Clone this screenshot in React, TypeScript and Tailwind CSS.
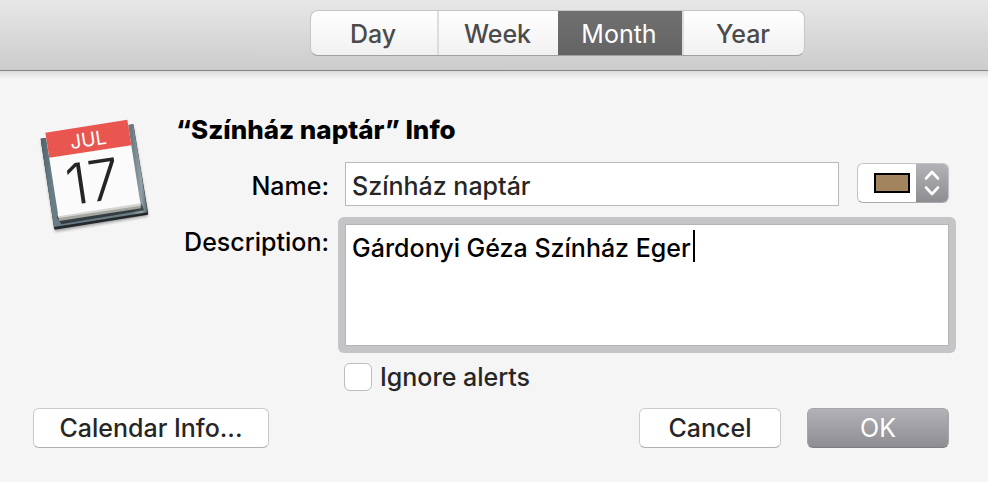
import { useState } from "react";

const views = [
  { name: "Day", width: "w-[126px]" },
  { name: "Week", width: "w-[121px]" },
  { name: "Month", width: "w-[124px]" },
  { name: "Year", width: "w-[122px]" },
];

function CalendarIcon() {
  return (
    <svg
      className="w-[116px] h-[120px] shrink-0"
      viewBox="51 47 348 360"
      role="img"
      aria-label="Calendar, July 17"
    >
      <defs>
        <linearGradient id="board" x1="0" y1="0" x2="1" y2="0">
          <stop offset="0" stopColor="#4e606a" />
          <stop offset="0.1" stopColor="#697d87" />
          <stop offset="0.85" stopColor="#6b7b82" />
          <stop offset="0.94" stopColor="#93a1a6" />
          <stop offset="1" stopColor="#55656d" />
        </linearGradient>
        <filter id="soft" x="-10%" y="-10%" width="120%" height="120%">
          <feGaussianBlur stdDeviation="5" />
        </filter>
      </defs>
      <path d="M64 122 L340 80 L384 348 L105 394 Z" fill="#000" opacity="0.35" filter="url(#soft)" />
      <path d="M62 115 L340 72 L384 336 L384 343 L104 388 L102 382 Z" fill="#22282b" />
      <path d="M62 115 L340 72 L383 336 L102 380 Z" fill="url(#board)" />
      <path d="M110 350 L365 312 L372 330 L124 372 Z" fill="#23292c" opacity="0.75" />
      <path d="M112 340 L361 303 L363 324 L118 362 Z" fill="#a3a59f" />
      <path d="M113 340 L361 303 L362 316 L116 353 Z" fill="#d6d7d3" />
      <path d="M76 97 L322 58 L361 309 L115 348 Z" fill="#fbfbfb" />
      <path d="M76 97 L322 58 L334 135 L88 172 Z" fill="#e9564f" />
      <g
        transform="rotate(-8.5 210 200)"
        fontFamily="Inter, sans-serif"
        textAnchor="middle"
      >
        <text x="217" y="138" fontSize="58" fontWeight="400" fill="#fff">
          JUL
        </text>
        <text x="212" y="305" fontSize="170" fontWeight="300" fill="#252525">
          17
        </text>
      </g>
    </svg>
  );
}

function ColorPicker() {
  return (
    <div className="relative flex w-[92px] h-10 shrink-0 rounded-md overflow-hidden border border-[#c3c3c3] border-b-[#aaaaaa] bg-white">
      <div className="flex flex-1 items-center justify-end pr-[6px]">
        <span className="w-9 h-5 border-2 border-black bg-[#a2845e]" />
      </div>
      <div className="flex w-8 items-center justify-center bg-linear-to-b from-[#b3b2b7] to-[#8e8d92]">
        <svg className="w-4 h-[26px]" viewBox="0 0 16 26" fill="none" stroke="#fff" strokeWidth="2.6" strokeLinecap="round" strokeLinejoin="round">
          <path d="M2 8.5 L8 2 L14 8.5 M2 17.5 L8 24 L14 17.5" />
        </svg>
      </div>
      <select aria-label="Calendar color" className="absolute inset-0 w-full opacity-0">
        <option>Brown</option>
      </select>
    </div>
  );
}

export default function App() {
  const [view, setView] = useState("Month");
  const [name, setName] = useState("Színház naptár");
  const [description, setDescription] = useState("Gárdonyi Géza Színház Eger");

  return (
    <div className="min-h-screen bg-[#f5f5f5] font-[Inter,sans-serif] text-[25px] leading-8 text-black">
      <header className="flex justify-center pl-[127px] pt-[10px] pb-[14px] border-b border-[#858585] bg-linear-to-b from-[#e7e7e7] to-[#cccccc]">
        <div className="flex h-[46px] rounded-lg overflow-hidden border border-[#c6c6c6] border-b-[#a0a0a0] bg-linear-to-b from-white to-[#f1f1f1]">
          {views.map((v) => (
            <button
              key={v.name}
              type="button"
              aria-pressed={view === v.name}
              onClick={() => setView(v.name)}
              className={`${v.width} pr-[2px] pt-px ${
                view === v.name
                  ? "bg-linear-to-b from-[#707070] to-[#646464] text-white"
                  : "text-[#4b4b4b] font-[450] border-l-2 first:border-l-0 border-[#dddddd]"
              }`}
            >
              {v.name}
            </button>
          ))}
        </div>
      </header>
      <div className="h-2 bg-linear-to-b from-[#dcdcdc] to-[#f5f5f5]" />

      <form className="pl-[33px] pr-[39px] pt-[33px] font-[450]" onSubmit={(e) => e.preventDefault()}>
        <div className="flex">
          <div className="w-[143px] shrink-0 pl-1 pt-1">
            <CalendarIcon />
          </div>
          <div className="flex-1 min-w-0">
            <h1 className="text-[26px] font-extrabold leading-9">“Színház naptár” Info</h1>
            <div className="flex mt-[14px] -ml-2">
              <label htmlFor="name" className="w-[161px] shrink-0 pt-2 text-right">
                Name:
              </label>
              <input
                id="name"
                value={name}
                onChange={(e) => setName(e.target.value)}
                className="ml-4 flex-1 min-w-0 h-11 px-[6px] pt-[3px] border border-[#b9b9b9] bg-white text-[#262626] outline-none"
              />
              <div className="ml-[18px] pt-px">
                <ColorPicker />
              </div>
            </div>
            <div className="flex mt-[11px] -ml-2">
              <label htmlFor="description" className="w-[161px] shrink-0 pt-[9px] text-right">
                Description:
              </label>
              <div className="relative ml-[9px] -mr-[7px] flex-1 min-w-0 rounded-md bg-[#c5c5c7] p-[7px]">
                <textarea
                  id="description"
                  value={description}
                  onChange={(e) => setDescription(e.target.value)}
                  className="block w-full h-[122px] px-[6px] py-[7px] resize-none border border-[#b4b6b5] bg-white caret-transparent outline-none"
                />
                <span className="absolute left-[355px] top-[13px] w-[2px] h-8 bg-black" />
              </div>
            </div>
            <label className="flex w-fit items-center gap-2 mt-2 ml-[168px] text-[#262626]">
              <input
                type="checkbox"
                className="appearance-none w-7 h-7 rounded-md border border-[#bdbdbd] bg-white checked:bg-[#8e8d92]"
              />
              Ignore alerts
            </label>
          </div>
        </div>

        <div className="flex items-center gap-[26px] mt-[15px] pb-[34px]">
          <button
            type="button"
            className="mr-auto w-[236px] h-10 rounded-md border border-[#cbcbcb] border-b-[#b0b0b0] bg-white text-[#262626]"
          >
            Calendar Info...
          </button>
          <button
            type="button"
            className="w-[142px] h-10 rounded-md border border-[#cbcbcb] border-b-[#b0b0b0] bg-white text-[#262626]"
          >
            Cancel
          </button>
          <button
            type="submit"
            className="w-[142px] h-10 rounded-md border border-[#a5a4a9] border-b-[#7d7c81] bg-linear-to-b from-[#b3b2b7] to-[#8e8d92] font-normal text-white"
          >
            OK
          </button>
        </div>
      </form>
    </div>
  );
}
